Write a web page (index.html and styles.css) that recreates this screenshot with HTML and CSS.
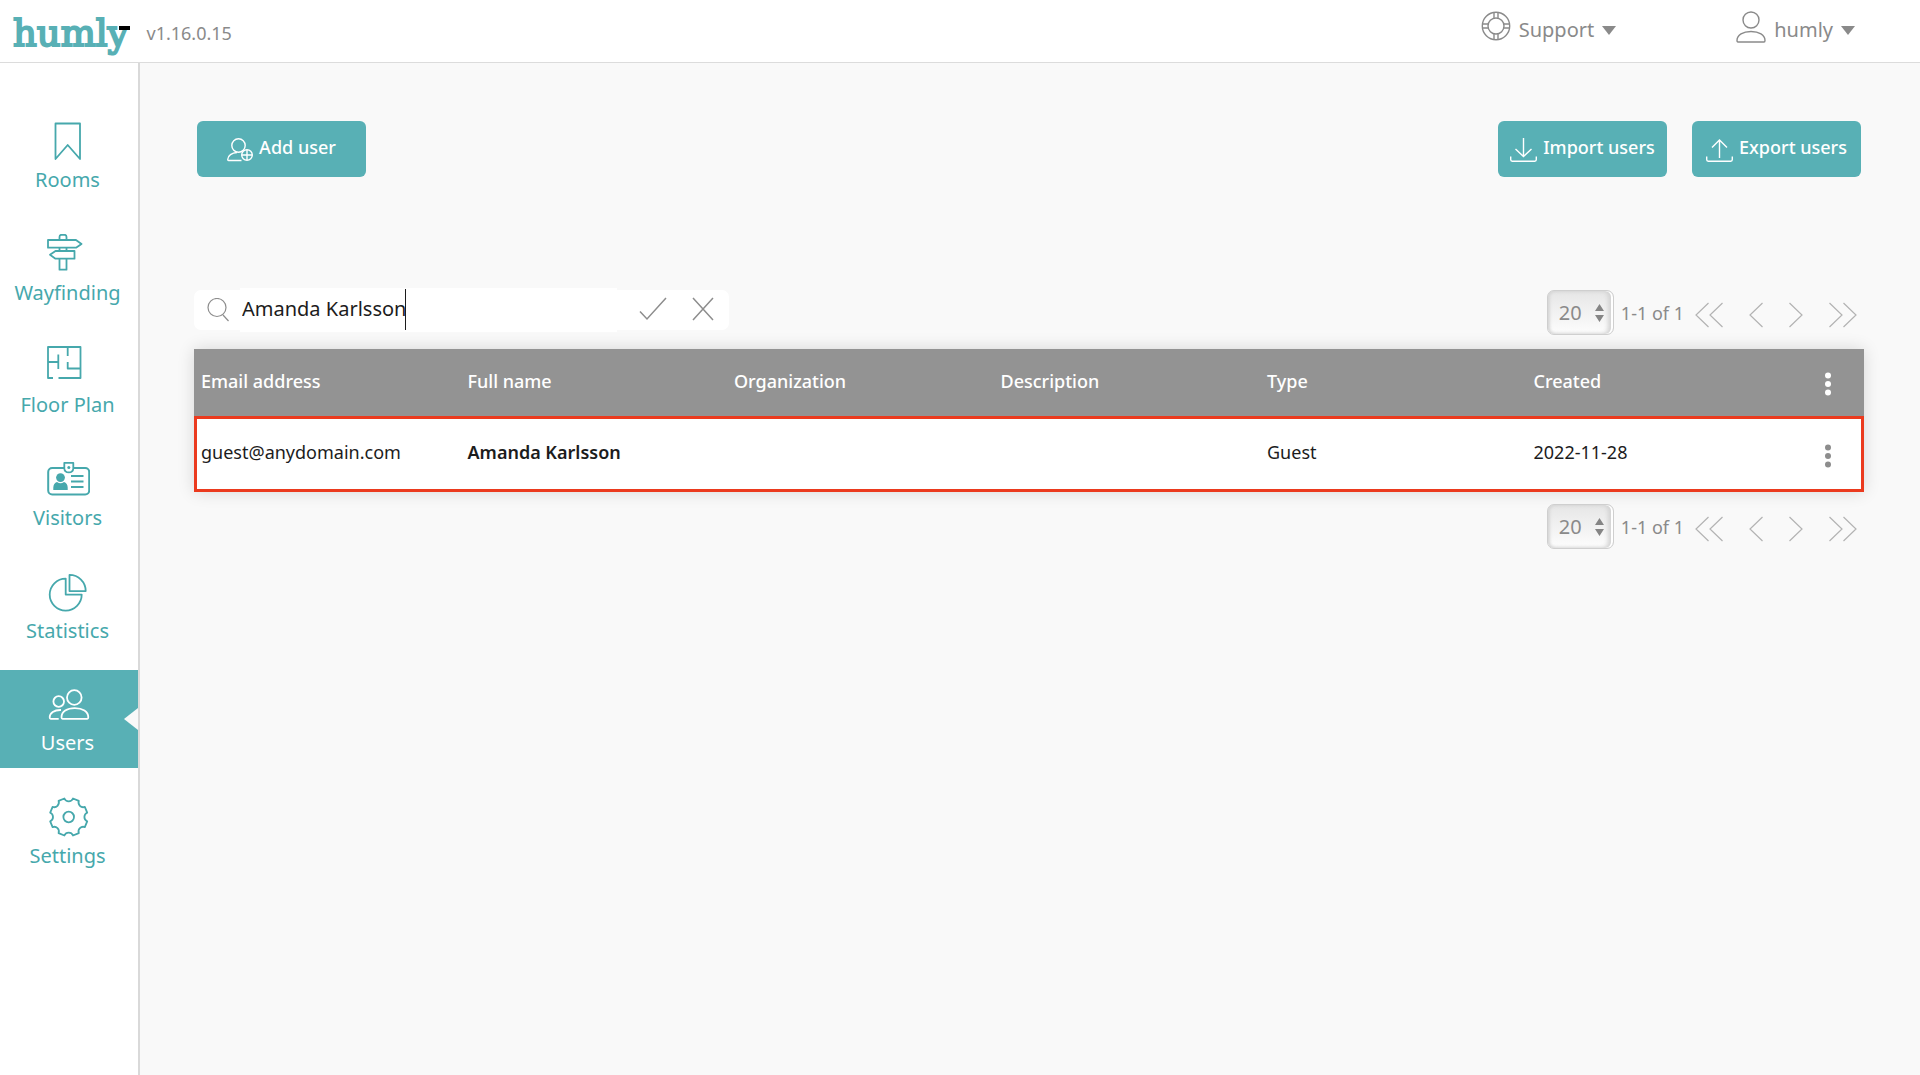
FILE: index.html
```html
<!DOCTYPE html>
<html lang="en">
<head>
<meta charset="utf-8">
<meta name="viewport" content="width=device-width, initial-scale=1">
<title>Humly - Users</title>
<link rel="stylesheet" href="styles.css">
</head>
<body>
<header class="topbar">
  <a class="logo" href="#">humly</a>
  <span class="version">v1.16.0.15</span>
  <div class="topbar-menus">
    <button class="menu" type="button">
      <svg class="menu-icon" width="30" height="32" viewBox="0 0 30 32" aria-hidden="true"><g fill="none" stroke="currentColor" stroke-width="1.4"><circle cx="15" cy="15" r="13.7"/><circle cx="15" cy="15" r="8"/><path d="M13 1.5V7.3M17 1.5V7.3M13 22.7V28.5M17 22.7V28.5M1.5 13H7.3M1.5 17H7.3M22.7 13H28.5M22.7 17H28.5"/></g></svg>
      <span>Support</span>
      <svg class="menu-arrow" width="14" height="9" viewBox="0 0 14 9" aria-hidden="true"><path fill="currentColor" d="M0 0H14L7 9Z"/></svg>
    </button>
    <button class="menu" type="button">
      <svg class="menu-icon" width="30" height="32" viewBox="0 0 30 32" aria-hidden="true"><g fill="none" stroke="currentColor" stroke-width="1.4"><circle cx="15" cy="9" r="8"/><path d="M2 31Q1 31 1 29.500C1 24 7 20.500 15 20.500S29 24 29 29.500Q29 31 28 31Z"/></g></svg>
      <span>humly</span>
      <svg class="menu-arrow" width="14" height="9" viewBox="0 0 14 9" aria-hidden="true"><path fill="currentColor" d="M0 0H14L7 9Z"/></svg>
    </button>
  </div>
</header>
<div class="layout">
  <nav class="sidebar" aria-label="Main">
    <ul class="nav-list">
      <li><a class="nav-link" href="#">
        <svg class="nav-icon" viewBox="0 0 44 40" aria-hidden="true"><path d="M9.500 2.500H34V38L21.700 24 9.500 38Z"/></svg>
        <span>Rooms</span></a></li>
      <li><a class="nav-link" href="#">
        <svg class="nav-icon" viewBox="0 0 44 40" aria-hidden="true"><path d="M13.500 6V3Q13.500 .8 15.500 .8H18.500Q20.500 .8 20.500 3V6M2 6H30L35.500 10 30 13.700H2ZM13.500 13.700V17M20.500 13.700V17M28.500 17V24.700H9.500L4 20.800 9.500 17ZM13.500 24.700V35.700H20.500V24.700"/></svg>
        <span>Wayfinding</span></a></li>
      <li><a class="nav-link" href="#">
        <svg class="nav-icon" viewBox="0 0 44 40" aria-hidden="true"><path d="M7 32H2V1H34.500V32H12.500M21.700 1V10M21.700 16V22.500H34.500M2 16H12.300M12.300 8.500V23"/></svg>
        <span>Floor Plan</span></a></li>
      <li><a class="nav-link" href="#">
        <svg class="nav-icon" viewBox="0 0 44 40" aria-hidden="true"><rect x="2.200" y="9" width="41" height="26.500" rx="4" stroke-width="2"/><path fill="#fff" d="M18.300 3.800H27.300V9.500Q27 13.400 22.800 13.400T18.300 9.500Z"/><g fill="currentColor" stroke="none"><circle cx="22.800" cy="8.600" r="1.500"/><circle cx="14.500" cy="18.600" r="4.400"/><path d="M7.300 31V28.500Q7.500 24 11 23Q14.500 25.500 18 23Q21.500 24 21.700 28.500V31Z"/></g><path stroke-width="2.200" d="M25 17H37.500M25 22.500H37.500M25 28H37.500"/></svg>
        <span>Visitors</span></a></li>
      <li><a class="nav-link" href="#">
        <svg class="nav-icon" viewBox="0 0 44 40" aria-hidden="true"><path d="M19.700 6.600V22.600H35.700A16 16 0 1 1 19.700 6.600ZM23.500 2.900A16.200 16.200 0 0 1 39.700 19.100H23.500Z"/></svg>
        <span>Statistics</span></a></li>
      <li><a class="nav-link nav-link-active" href="#" aria-current="page">
        <svg class="nav-icon" viewBox="0 0 44 40" aria-hidden="true"><circle cx="28.300" cy="13.500" r="7.300"/><path d="M16.500 34.800Q15.500 34.800 15.500 33.300C15.500 27.500 21 24.100 28.800 24.100S42.300 27.500 42.300 33.300Q42.300 34.800 41.300 34.800Z"/><circle cx="12.700" cy="17.500" r="5.300"/><path d="M15 26C8 25.800 3.700 29 3.700 33.300Q3.700 34.800 4.700 34.800H12.700"/></svg>
        <span>Users</span></a></li>
      <li><a class="nav-link" href="#">
        <svg class="nav-icon" viewBox="0 0 44 40" aria-hidden="true"><g transform="translate(22.700 20)"><circle r="5.300"/><path d="M-4.300-18.500A4.700 4.700 0 0 0 4.300-18.500L10.100-16.100A4.700 4.700 0 0 0 16.100-10.100L18.500-4.300A4.700 4.700 0 0 0 18.500 4.300L16.100 10.100A4.700 4.700 0 0 0 10.100 16.100L4.300 18.500A4.700 4.700 0 0 0-4.300 18.500L-10.100 16.100A4.700 4.700 0 0 0-16.100 10.100L-18.500 4.300A4.700 4.700 0 0 0-18.500-4.300L-16.100-10.100A4.700 4.700 0 0 0-10.100-16.100Z"/></g></svg>
        <span>Settings</span></a></li>
    </ul>
  </nav>
  <main class="content">
    <div class="actions">
      <button class="btn" type="button">
        <svg class="btn-icon" width="26" height="24" viewBox="0 0 26 24" aria-hidden="true"><circle cx="11.500" cy="7.500" r="6.700"/><path d="M14.500 22.500H1.500Q.7 22.500 .7 21.500C.7 17.500 5 14.700 10 14.500"/><circle cx="20" cy="17" r="5.300"/><path d="M20 11.700V22.300M14.700 17H25.300"/></svg>
        <span>Add user</span>
      </button>
      <div class="actions-right">
        <button class="btn" type="button">
          <svg class="btn-icon" width="27" height="24" viewBox="0 0 27 24" aria-hidden="true"><path d="M13.500 0V18M5.500 11 13.500 18.500 21.500 11M.7 18.500V21.500Q.7 23.200 2.200 23.200H24.800Q26.300 23.200 26.300 21.500V18.500"/></svg>
          <span>Import users</span>
        </button>
        <button class="btn" type="button">
          <svg class="btn-icon" width="27" height="24" viewBox="0 0 27 24" aria-hidden="true"><path d="M13.500 20V2.500M6 9.500 13.500 2 21 9.500M.7 18.500V21.500Q.7 23.200 2.200 23.200H24.800Q26.300 23.200 26.300 21.500V18.500"/></svg>
          <span>Export users</span>
        </button>
      </div>
    </div>
    <div class="filters">
      <form class="search" role="search">
        <svg width="24" height="25" viewBox="0 0 24 25" aria-hidden="true"><g fill="none" stroke="#8d8d8d" stroke-width="1.200"><circle cx="11" cy="9.500" r="9"/><path d="M17 17 22.500 23"/></g></svg>
        <span class="search-field">
          <input class="search-input" type="text" value="Amanda Karlsson" aria-label="Search users">
          <span class="search-caret"></span>
        </span>
        <button class="icon-btn" type="button" aria-label="Apply search"><svg width="28" height="26" viewBox="0 0 28 26" aria-hidden="true"><path fill="none" stroke="#8d8d8d" stroke-width="1.500" d="M1 14.500 8 22 27 1"/></svg></button>
        <button class="icon-btn" type="button" aria-label="Clear search"><svg width="22" height="26" viewBox="0 0 22 26" aria-hidden="true"><path fill="none" stroke="#8d8d8d" stroke-width="1.500" d="M1 1 21 23M21 1 1 23"/></svg></button>
      </form>
      <div class="pager">
        <span class="pager-size">
          <select class="pager-select" aria-label="Rows per page"><option>20</option></select>
          <svg class="pager-arrows" width="9" height="18" viewBox="0 0 9 18" aria-hidden="true"><path fill="#858585" d="M0 7 4.500 0 9 7ZM0 11H9L4.500 18Z"/></svg>
        </span>
        <span class="pager-range">1-1 of 1</span>
        <span class="pager-nav">
          <button class="icon-btn" type="button" aria-label="First page"><svg class="chevron" width="28" height="26" viewBox="0 0 28 26"><path d="M13.500 1 1 13 13.500 25M27.500 1 15 13 27.500 25"/></svg></button>
          <button class="icon-btn" type="button" aria-label="Previous page"><svg class="chevron" width="14" height="26" viewBox="0 0 14 26"><path d="M13.500 1 1 13 13.500 25"/></svg></button>
          <button class="icon-btn" type="button" aria-label="Next page"><svg class="chevron" width="14" height="26" viewBox="0 0 14 26"><path d="M.5 1 13 13 .5 25"/></svg></button>
          <button class="icon-btn" type="button" aria-label="Last page"><svg class="chevron" width="28" height="26" viewBox="0 0 28 26"><path d="M.5 1 13 13 .5 25M14.500 1 27 13 14.500 25"/></svg></button>
        </span>
      </div>
    </div>
    <table class="users">
      <thead>
        <tr>
          <th scope="col">Email address</th>
          <th scope="col">Full name</th>
          <th scope="col">Organization</th>
          <th scope="col">Description</th>
          <th scope="col">Type</th>
          <th scope="col">Created</th>
          <th class="col-menu"><button class="icon-btn" type="button" aria-label="Table options"><svg width="6" height="24" viewBox="0 0 6 24" aria-hidden="true"><g fill="currentColor"><circle cx="3" cy="3.500" r="3"/><circle cx="3" cy="12" r="3"/><circle cx="3" cy="20.500" r="3"/></g></svg></button></th>
        </tr>
      </thead>
      <tbody>
        <tr class="row-marked">
          <td>guest@anydomain.com</td>
          <td class="full-name">Amanda Karlsson</td>
          <td></td>
          <td></td>
          <td>Guest</td>
          <td>2022-11-28</td>
          <td class="col-menu"><button class="icon-btn" type="button" aria-label="User options"><svg width="6" height="24" viewBox="0 0 6 24" aria-hidden="true"><g fill="#8d8d8d"><circle cx="3" cy="3.500" r="3"/><circle cx="3" cy="12" r="3"/><circle cx="3" cy="20.500" r="3"/></g></svg></button></td>
        </tr>
      </tbody>
    </table>
    <div class="pager pager-bottom">
      <span class="pager-size">
        <select class="pager-select" aria-label="Rows per page"><option>20</option></select>
        <svg class="pager-arrows" width="9" height="18" viewBox="0 0 9 18" aria-hidden="true"><path fill="#858585" d="M0 7 4.500 0 9 7ZM0 11H9L4.500 18Z"/></svg>
      </span>
      <span class="pager-range">1-1 of 1</span>
      <span class="pager-nav">
        <button class="icon-btn" type="button" aria-label="First page"><svg class="chevron" width="28" height="26" viewBox="0 0 28 26"><path d="M13.500 1 1 13 13.500 25M27.500 1 15 13 27.500 25"/></svg></button>
        <button class="icon-btn" type="button" aria-label="Previous page"><svg class="chevron" width="14" height="26" viewBox="0 0 14 26"><path d="M13.500 1 1 13 13.500 25"/></svg></button>
        <button class="icon-btn" type="button" aria-label="Next page"><svg class="chevron" width="14" height="26" viewBox="0 0 14 26"><path d="M.5 1 13 13 .5 25"/></svg></button>
        <button class="icon-btn" type="button" aria-label="Last page"><svg class="chevron" width="28" height="26" viewBox="0 0 28 26"><path d="M.5 1 13 13 .5 25M14.500 1 27 13 14.500 25"/></svg></button>
      </span>
    </div>
  </main>
</div>
</body>
</html>
```
FILE: styles.css
```css
:root {
  --teal: #58b0b5;
  --teal-text: #46a8ac;
  --gray: #8a8a8a;
  --page: #f9f9f9;
}

* {
  box-sizing: border-box;
}

body {
  display: flex;
  flex-direction: column;
  min-height: 100vh;
  margin: 0;
  background: #fff;
  color: #1c1c1c;
  font: 18px/26px "Noto Sans", sans-serif;
}

button,
input,
select {
  font: inherit;
  color: inherit;
}

svg {
  display: block;
  flex: none;
}

/* Top bar */
.topbar {
  display: flex;
  align-items: center;
  min-height: 63px;
  padding: 0 65px 0 13px;
  border-bottom: 1px solid #dcdcdc;
  color: var(--gray);
}

.logo {
  position: relative;
  padding-top: 5px;
  color: var(--teal);
  font: 37px/48px "DejaVu Serif", serif;
  text-decoration: none;
  -webkit-text-stroke: 2px var(--teal);
}

.logo::after {
  content: "";
  position: absolute;
  top: 21px;
  right: -2px;
  width: 11px;
  height: 4px;
  background: #000;
}

.version {
  margin: 3px 0 0 18px;
}

.topbar-menus {
  display: flex;
  gap: 120px;
  margin-left: auto;
  padding-bottom: 2px;
}

.menu {
  display: flex;
  align-items: center;
  gap: 8px;
  padding: 0;
  border: 0;
  background: none;
  font-size: 20px;
  line-height: 28px;
  cursor: pointer;
}

.menu-icon {
  margin-bottom: 6px;
}

/* Sidebar */
.layout {
  display: flex;
  flex: 1;
}

.sidebar {
  flex: none;
  width: 140px;
  padding-top: 44px;
  border-right: 2px solid #d9d9d9;
}

.nav-list {
  display: flex;
  flex-direction: column;
  justify-content: space-between;
  min-height: 774px;
  margin: 0;
  padding: 0;
  list-style: none;
}

.nav-link {
  position: relative;
  display: flex;
  flex-direction: column;
  align-items: center;
  gap: 5px;
  padding: 14px 3px 11px 0;
  color: var(--teal-text);
  font-size: 20px;
  line-height: 28px;
  text-decoration: none;
}

.nav-icon {
  width: 44px;
  height: 40px;
  fill: none;
  stroke: currentColor;
  stroke-width: 1.8;
  stroke-linejoin: round;
}

.nav-link-active {
  background: var(--teal);
  color: #fff;
}

.nav-link-active::after {
  content: "";
  position: absolute;
  top: 38px;
  right: 0;
  border: solid transparent;
  border-width: 11px 14px 11px 0;
  border-right-color: var(--page);
}

/* Content */
.content {
  flex: 1;
  min-width: 0;
  padding: 58px 56px 58px 54px;
  background: var(--page);
}

.actions {
  display: flex;
  justify-content: space-between;
  padding: 0 3px;
}

.actions-right {
  display: flex;
  gap: 25px;
}

.btn {
  display: flex;
  align-items: center;
  justify-content: center;
  gap: 6px;
  width: 169px;
  height: 56px;
  padding: 0 0 4px;
  border: 0;
  border-radius: 6px;
  background: var(--teal);
  color: #fff;
  font-weight: 500;
  cursor: pointer;
}

.btn-icon {
  margin-top: 6px;
  fill: none;
  stroke: currentColor;
  stroke-width: 1.4;
}

.filters {
  display: flex;
  align-items: flex-start;
  justify-content: space-between;
  margin: 113px 0 14px;
}

.search {
  display: flex;
  align-items: center;
  width: 535px;
  height: 40px;
  padding: 0 15px 0 12px;
  border-radius: 7px;
  background: #fff;
}

.search-field {
  position: relative;
  flex: 1;
  margin: 0 22px 0 10px;
}

.search-input {
  display: block;
  width: 100%;
  height: 44px;
  padding: 0 2px 4px;
  border: 0;
  outline: 0;
  background: #fff;
  font-size: 20px;
}

.search-caret {
  position: absolute;
  top: 1px;
  left: 165px;
  width: 1px;
  height: 41px;
  background: #1c1c1c;
}

.icon-btn {
  padding: 0;
  border: 0;
  background: none;
  cursor: pointer;
}

.search .icon-btn + .icon-btn {
  margin-left: 25px;
}

/* Pager */
.pager {
  display: flex;
  align-items: center;
  padding-right: 7px;
  color: var(--gray);
}

.pager-bottom {
  justify-content: flex-end;
  margin-top: 12px;
}

.pager-size {
  position: relative;
}

.pager-select {
  display: block;
  width: 67px;
  height: 45px;
  padding: 0 0 0 11px;
  border: 1px solid #cfcfcf;
  border-radius: 7px;
  appearance: none;
  background: linear-gradient(#e6e6e6, #fdfdfd);
  box-shadow: inset -2px 0 0 #fff, inset 2px 0 3px #d6d6d6, inset -5px 0 4px #d3d3d3;
  font-size: 20px;
}

.pager-arrows {
  position: absolute;
  top: 14px;
  right: 10px;
  pointer-events: none;
}

.pager-range {
  margin: 0 11px 0 7px;
}

.pager-nav {
  display: flex;
  gap: 26px;
  padding-top: 4px;
}

.chevron {
  fill: none;
  stroke: #b3b3b3;
  stroke-width: 1.2;
}

/* Users table */
.users {
  width: 100%;
  border-collapse: collapse;
  table-layout: fixed;
  background: #fff;
  box-shadow: 0 0 16px rgba(0, 0, 0, 0.14);
}

.users th,
.users td {
  padding: 0 0 4px 7px;
  text-align: left;
}

.users th {
  height: 67px;
  background: #939393;
  color: #fff;
  font-weight: 500;
}

.users td {
  height: 76px;
}

.users .full-name {
  font-weight: 600;
}

.users .col-menu {
  width: 71px;
  padding: 0 1px 0 0;
  text-align: center;
}

.col-menu .icon-btn {
  display: inline-block;
  vertical-align: middle;
}

.row-marked {
  outline: 3px solid #eb3a1e;
  outline-offset: -3px;
}
```
